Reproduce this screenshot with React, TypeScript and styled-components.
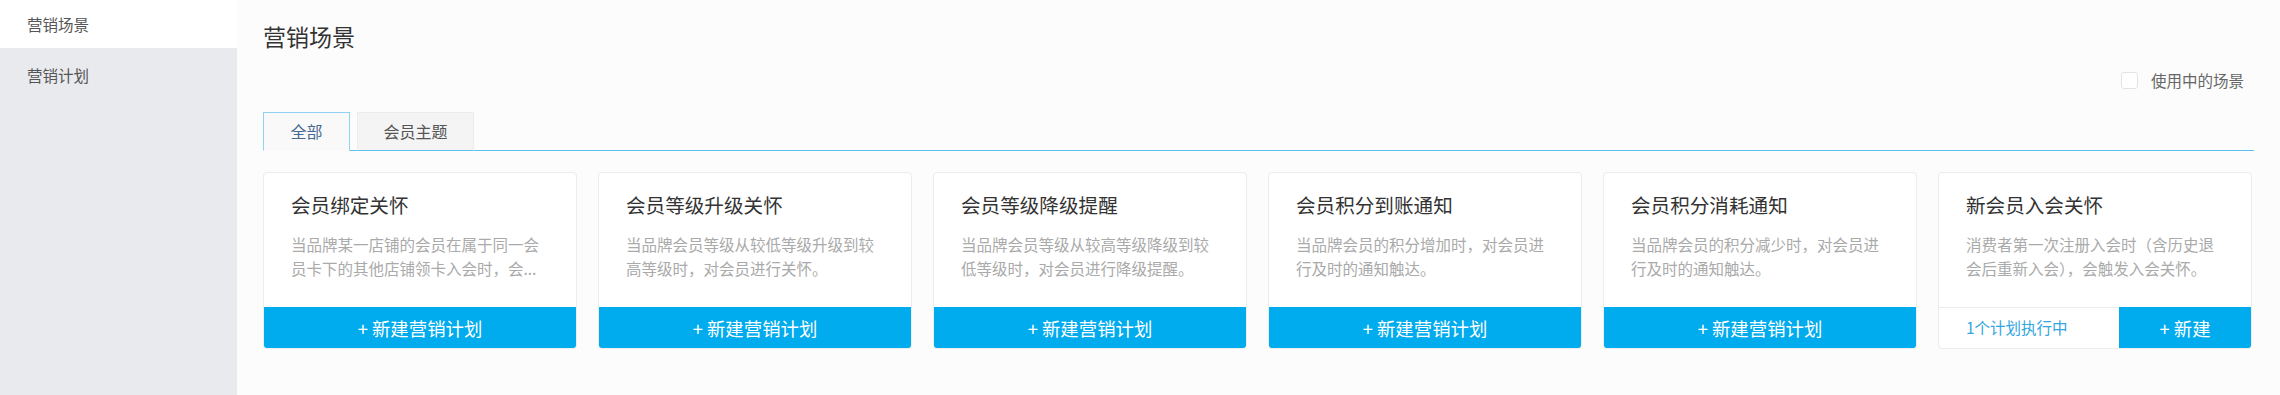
import React from 'react'
import styled, { createGlobalStyle } from 'styled-components'

const GlobalStyle = createGlobalStyle`
	* {
		box-sizing: border-box;
	}
	body {
		margin: 0;
		background: #fcfcfc;
		font-family: 'Noto Sans CJK SC', 'Noto Sans', sans-serif;
		color: #333;
	}
`

const Layout = styled.div`
	display: flex;
	min-height: 395px;
`
const Sidebar = styled.aside`
	width: 237px;
	flex-shrink: 0;
	background: #e9eaed;
	display: flex;
	flex-direction: column;
	gap: 3px;
`
const SideItem = styled.div<{ $active?: boolean }>`
	height: 48px;
	line-height: 48px;
	padding-left: 27px;
	font-size: 15.5px;
	color: #555;
	background: ${(p) => (p.$active ? '#fff' : 'transparent')};
`
const Main = styled.main`
	flex: 1;
	padding: 20px 26px 0 26px;
	background: #fcfcfc;
`
const PageTitle = styled.h1`
	margin: 0;
	font-size: 23px;
	line-height: 32px;
	font-weight: 400;
	color: #333;
`
const Toolbar = styled.div`
	display: flex;
	justify-content: flex-end;
	align-items: center;
	height: 24px;
	margin-top: 16px;
	padding-right: 10px;
`
const CheckLabel = styled.label`
	display: flex;
	align-items: center;
	gap: 13px;
	font-size: 15.5px;
	color: #666;
`
const CheckBox = styled.span`
	width: 17px;
	height: 17px;
	border: 1px solid #e3e3e3;
	border-radius: 3px;
	background: #fff;
`
const Tabs = styled.div`
	display: flex;
	gap: 7px;
	margin-top: 20px;
	border-bottom: 1px solid #5bc0eb;
`
const Tab = styled.div<{ $active?: boolean }>`
	height: 39px;
	line-height: 37px;
	font-size: 16px;
	margin-bottom: -1px;
	border: 1px solid ${(p) => (p.$active ? '#8fd2f2' : '#ececec')};
	border-bottom: 1px solid ${(p) => (p.$active ? '#f9f9f9' : '#5bc0eb')};
	background: ${(p) => (p.$active ? '#f9f9f9' : '#f4f4f4')};
	color: ${(p) => (p.$active ? '#46698f' : '#555')};
	text-align: center;
	width: ${(p) => (p.$active ? '87px' : '117px')};
`
const CardGrid = styled.div`
	display: grid;
	grid-template-columns: repeat(6, 314px);
	gap: 21px;
	margin-top: 21px;
`
const Card = styled.div`
	height: 177px;
	display: flex;
	flex-direction: column;
	background: #fff;
	border: 1px solid #ececec;
	border-radius: 4px;
	overflow: hidden;
`
const CardBody = styled.div`
	padding: 18px 27px 0 27px;
`
const CardTitle = styled.div`
	font-size: 19.6px;
	line-height: 28px;
	color: #333;
`
const CardDesc = styled.div`
	margin-top: 13px;
	font-size: 15.5px;
	line-height: 24px;
	color: #aaa;
`
const CardFooter = styled.div`
	margin-top: auto;
	display: flex;
	height: 41px;
`
const CreateButton = styled.button<{ $width?: string }>`
	border: none;
	background: #00abee;
	color: #fff;
	font-family: inherit;
	font-size: 18.4px;
	height: 41px;
	padding: 0;
	flex: ${(p) => (p.$width ? `0 0 ${p.$width}` : '1')};
	cursor: pointer;
`
const RunningInfo = styled.div`
	flex: 1;
	border-top: 1px solid #ececec;
	padding-left: 27px;
	line-height: 39px;
	font-size: 15.5px;
	color: #33a6e0;
`

const scenes = [
	{
		title: '会员绑定关怀',
		desc: '当品牌某一店铺的会员在属于同一会员卡下的其他店铺领卡入会时，会...',
	},
	{
		title: '会员等级升级关怀',
		desc: '当品牌会员等级从较低等级升级到较高等级时，对会员进行关怀。',
	},
	{
		title: '会员等级降级提醒',
		desc: '当品牌会员等级从较高等级降级到较低等级时，对会员进行降级提醒。',
	},
	{
		title: '会员积分到账通知',
		desc: '当品牌会员的积分增加时，对会员进行及时的通知触达。',
	},
	{
		title: '会员积分消耗通知',
		desc: '当品牌会员的积分减少时，对会员进行及时的通知触达。',
	},
	{
		title: '新会员入会关怀',
		desc: '消费者第一次注册入会时（含历史退会后重新入会），会触发入会关怀。',
		running: 1,
	},
]

const App = () => {
	return (
		<>
			<GlobalStyle />
			<Layout>
				<Sidebar>
					<SideItem $active>营销场景</SideItem>
					<SideItem>营销计划</SideItem>
				</Sidebar>
				<Main>
					<PageTitle>营销场景</PageTitle>
					<Toolbar>
						<CheckLabel>
							<CheckBox />
							使用中的场景
						</CheckLabel>
					</Toolbar>
					<Tabs>
						<Tab $active>全部</Tab>
						<Tab>会员主题</Tab>
					</Tabs>
					<CardGrid>
						{scenes.map((s) => (
							<Card key={s.title}>
								<CardBody>
									<CardTitle>{s.title}</CardTitle>
									<CardDesc>{s.desc}</CardDesc>
								</CardBody>
								<CardFooter>
									{s.running ? (
										<>
											<RunningInfo>{s.running}个计划执行中</RunningInfo>
											<CreateButton $width="132px">+ 新建</CreateButton>
										</>
									) : (
										<CreateButton>+ 新建营销计划</CreateButton>
									)}
								</CardFooter>
							</Card>
						))}
					</CardGrid>
				</Main>
			</Layout>
		</>
	)
}

export default App
